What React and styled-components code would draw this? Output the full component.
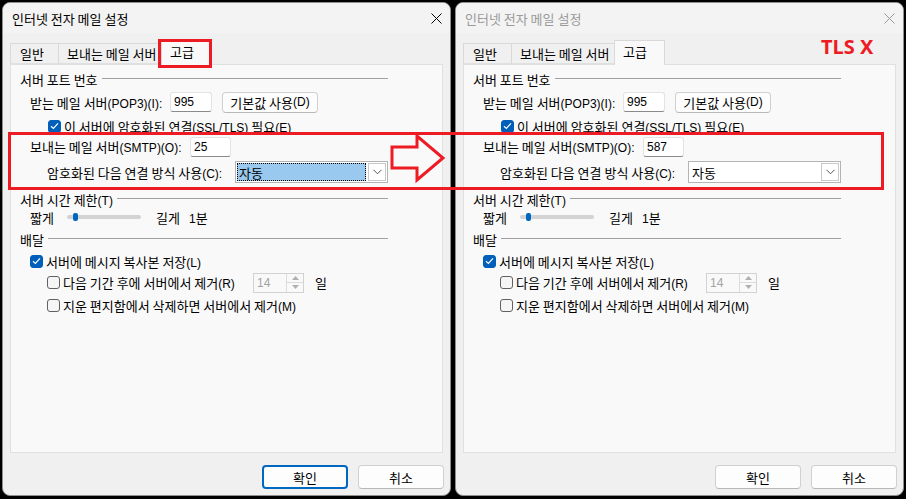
import React from "react";
import styled, { createGlobalStyle, css } from "styled-components";

const GlobalStyle = createGlobalStyle`
  html, body {
    margin: 0;
    padding: 0;
    background: #000;
  }
  body {
    font-family: "Noto Sans CJK KR", "Liberation Sans", sans-serif;
    font-size: 13px;
    color: #000;
  }
`;

const Stage = styled.div`
  position: relative;
  width: 906px;
  height: 499px;
  box-sizing: border-box;
  padding: 2px 0 0 2px;
  display: flex;
  gap: 4px;
  background: #000;
  overflow: hidden;
`;

const Window = styled.div`
  width: 449px;
  height: 494px;
  box-sizing: border-box;
  background: #f0f0f0;
  border: 1px solid #8f8f8f;
  border-radius: 8px;
  overflow: hidden;
  display: flex;
  flex-direction: column;
`;

const TitleBar = styled.div`
  height: 30px;
  flex: none;
  display: flex;
  align-items: center;
  justify-content: space-between;
  padding: 0 8px 0 9px;
  background: #f3f3f3;
  color: ${(p) => (p.$active ? "#000" : "#9a9a9a")};
`;

const Body = styled.div`
  flex: 1;
  display: flex;
  flex-direction: column;
  padding: 7px 7px 0 7px;
`;

const TabStrip = styled.div`
  height: 24px;
  display: flex;
  align-items: flex-end;
  position: relative;
  z-index: 2;
`;

const Tab = styled.div`
  box-sizing: border-box;
  width: ${(p) => p.$w}px;
  height: ${(p) => (p.$selected ? 25 : 21)}px;
  margin-bottom: ${(p) => (p.$selected ? -1 : 0)}px;
  margin-right: -1px;
  padding: 0 0 ${(p) => (p.$selected ? 3 : 0)}px ${(p) => p.$pad}px;
  display: flex;
  align-items: center;
  border: 1px solid #d9d9d9;
  border-bottom: ${(p) => (p.$selected ? "none" : "1px solid #e0e0e0")};
  background: ${(p) => (p.$selected ? "#f9f9f9" : "#f0f0f0")};
  position: relative;
  z-index: ${(p) => (p.$selected ? 2 : 1)};
  white-space: nowrap;
`;

const Panel = styled.div`
  box-sizing: border-box;
  height: 389px;
  background: #f9f9f9;
  border: 1px solid #e0e0e0;
  padding: 5px 0 0 9px;
  display: flex;
  flex-direction: column;
`;

const GroupHead = styled.div`
  width: 368px;
  height: 18px;
  display: flex;
  align-items: center;
  gap: 4px;
  margin-top: ${(p) => p.$mt || 0}px;
  white-space: nowrap;

  &::after {
    content: "";
    flex: 1;
    height: 1px;
    margin-top: -2px;
    background: #a0a0a0;
  }
`;

const Row = styled.div`
  display: flex;
  align-items: center;
  height: ${(p) => p.$h || 20}px;
  margin-top: ${(p) => p.$mt || 0}px;
  padding-left: ${(p) => p.$indent || 0}px;
  white-space: nowrap;
`;

const Label = styled.span`
  flex: none;
  width: ${(p) => (p.$w ? `${p.$w}px` : "auto")};
`;

/* latin runs are set a pixel smaller than the hangul, as the original UI font does */
const Lat = styled.span`
  font-family: "Liberation Sans", sans-serif;
  font-size: 12px;
`;

const TextBox = styled.div`
  box-sizing: border-box;
  width: ${(p) => p.$w}px;
  height: 20px;
  background: #fff;
  border: 1px solid #e3e3e3;
  border-bottom-color: #8a8a8a;
  border-radius: 3px;
  padding-left: 3px;
  display: flex;
  align-items: center;
  font-family: "Liberation Sans", sans-serif;
  font-size: 12px;
`;

const Button = styled.div`
  box-sizing: border-box;
  width: ${(p) => p.$w}px;
  height: ${(p) => p.$h}px;
  margin-left: ${(p) => p.$ml || 0}px;
  background: #fdfdfd;
  border: 1px solid #d0d0d0;
  border-bottom-color: #b8b8b8;
  border-radius: 4px;
  display: flex;
  align-items: center;
  justify-content: center;
  ${(p) =>
    p.$default &&
    css`
      border: 2px solid #0067c0;
    `}
`;

const Box = styled.span`
  box-sizing: border-box;
  width: 13px;
  height: 13px;
  flex: none;
  margin-right: 3px;
  border-radius: 3px;
  border: 1px solid ${(p) => (p.$checked ? "#005fb8" : "#616161")};
  background: ${(p) => (p.$checked ? "#005fb8" : "#f5f5f5")};
  display: flex;
  align-items: center;
  justify-content: center;
`;

const Combo = styled.div`
  box-sizing: border-box;
  width: 153px;
  height: 22px;
  margin-left: 1px;
  background: #fff;
  border: 1px solid #b4b4b4;
  padding: 1px;
  display: flex;
  gap: 2px;
`;

const ComboValue = styled.div`
  flex: 1;
  display: flex;
  align-items: center;
  padding-left: 2px;
  ${(p) =>
    p.$focused &&
    css`
      background: #99c9ef;
      outline: 1px dotted #000;
      outline-offset: -1px;
    `}
`;

const ComboButton = styled.div`
  box-sizing: border-box;
  width: 18px;
  border: 1px solid #c9c9c9;
  background: #fff;
  display: flex;
  align-items: center;
  justify-content: center;
`;

const SliderTrack = styled.div`
  position: relative;
  flex: none;
  width: 74px;
  height: 4px;
  border-radius: 2px;
  background: #d3d3d3;
  margin-right: 15px;
`;

const SliderThumb = styled.div`
  position: absolute;
  left: 6px;
  top: -2px;
  width: 5px;
  height: 8px;
  border-radius: 2px;
  background: #0067c0;
`;

const Spinner = styled.div`
  box-sizing: border-box;
  width: 51px;
  height: 20px;
  border: 1px solid #d2d2d2;
  background: #f9f9f9;
  display: flex;
  margin-right: 11px;
`;

const SpinValue = styled.span`
  flex: 1;
  color: #a3a3a3;
  padding-left: 3px;
  display: flex;
  align-items: center;
  font-family: "Liberation Sans", sans-serif;
  font-size: 12px;
`;

const SpinButtons = styled.div`
  width: 16px;
  display: flex;
  flex-direction: column;
  border-left: 1px solid #dcdcdc;
`;

const SpinArrow = styled.div`
  flex: 1;
  display: flex;
  align-items: center;
  justify-content: center;
  border-top: ${(p) => (p.$down ? "1px solid #dcdcdc" : "none")};
`;

const Footer = styled.div`
  display: flex;
  justify-content: flex-end;
  gap: 10px;
  margin: 12px -1px 0 0;
`;

const RedFrame = styled.div`
  position: absolute;
  z-index: 10;
  box-sizing: border-box;
  left: ${(p) => p.$x}px;
  top: ${(p) => p.$y}px;
  width: ${(p) => p.$w}px;
  height: ${(p) => p.$h}px;
  border: 3px solid #ed1c24;
  pointer-events: none;
`;

const ArrowMark = styled.svg`
  position: absolute;
  z-index: 10;
  left: 388px;
  top: 132px;
`;

const Note = styled.div`
  position: absolute;
  z-index: 10;
  left: 821px;
  top: 35px;
  font-family: "Noto Sans", sans-serif;
  font-weight: 700;
  font-size: 20px;
  line-height: 24px;
  color: #ed1c24;
`;

const Check = () => (
  <svg width="9" height="8" viewBox="0 0 9 8">
    <path d="M1 4.2 L3.4 6.4 L8 1.4" fill="none" stroke="#fff" strokeWidth="1.2" />
  </svg>
);

const Close = ({ color }) => (
  <svg width="11" height="11" viewBox="0 0 11 11">
    <path d="M0.5 0.5 L10.5 10.5 M10.5 0.5 L0.5 10.5" stroke={color} strokeWidth="1" />
  </svg>
);

const Chevron = () => (
  <svg width="9" height="6" viewBox="0 0 9 6">
    <path d="M0.5 0.8 L4.5 4.8 L8.5 0.8" fill="none" stroke="#555" strokeWidth="1" />
  </svg>
);

const Tri = ({ down }) => (
  <svg width="7" height="4" viewBox="0 0 7 4">
    <path d={down ? "M0 0 H7 L3.5 4 Z" : "M0 4 H7 L3.5 0 Z"} fill="#b0b0b0" />
  </svg>
);

function Dialog({ active, smtpPort }) {
  return (
    <Window>
      <TitleBar $active={active}>
        <span>인터넷 전자 메일 설정</span>
        <Close color={active ? "#000" : "#9a9a9a"} />
      </TitleBar>
      <Body>
        <TabStrip>
          <Tab $w={49} $pad={9}>일반</Tab>
          <Tab $w={104} $pad={8}>보내는 메일 서버</Tab>
          <Tab $w={51} $pad={8} $selected>고급</Tab>
        </TabStrip>
        <Panel>
          <GroupHead>서버 포트 번호</GroupHead>
          <Row $h={22} $mt={3} $indent={10}>
            <Label $w={140}>
              받는 메일 서버<Lat>(POP3)(I):</Lat>
            </Label>
            <TextBox $w={42}>995</TextBox>
            <Button $w={96} $h={21} $ml={10}>
              기본값 사용<Lat>(D)</Lat>
            </Button>
          </Row>
          <Row $h={18} $mt={4} $indent={28}>
            <Box $checked>
              <Check />
            </Box>
            <Label>
              이 서버에 암호화된 연결<Lat>(SSL/TLS)</Lat> 필요<Lat>(E)</Lat>
            </Label>
          </Row>
          <Row $h={21} $mt={1} $indent={10}>
            <Label $w={160}>
              보내는 메일 서버<Lat>(SMTP)(O):</Lat>
            </Label>
            <TextBox $w={41}>{smtpPort}</TextBox>
          </Row>
          <Row $h={22} $mt={4} $indent={27}>
            <Label $w={187}>
              암호화된 다음 연결 방식 사용<Lat>(C):</Lat>
            </Label>
            <Combo>
              <ComboValue $focused={active}>자동</ComboValue>
              <ComboButton>
                <Chevron />
              </ComboButton>
            </Combo>
          </Row>
          <GroupHead $mt={7}>
            <span>
              서버 시간 제한<Lat>(T)</Lat>
            </span>
          </GroupHead>
          <Row $h={18} $indent={10}>
            <Label $w={37}>짧게</Label>
            <SliderTrack>
              <SliderThumb />
            </SliderTrack>
            <Label $w={33}>길게</Label>
            <Label>
              <Lat>1</Lat>분
            </Label>
          </Row>
          <GroupHead $mt={4}>배달</GroupHead>
          <Row $h={20} $mt={3} $indent={10}>
            <Box $checked>
              <Check />
            </Box>
            <Label>
              서버에 메시지 복사본 저장<Lat>(L)</Lat>
            </Label>
          </Row>
          <Row $h={21} $mt={1} $indent={27}>
            <Box />
            <Label $w={190}>
              다음 기간 후에 서버에서 제거<Lat>(R)</Lat>
            </Label>
            <Spinner>
              <SpinValue>14</SpinValue>
              <SpinButtons>
                <SpinArrow>
                  <Tri />
                </SpinArrow>
                <SpinArrow $down>
                  <Tri down />
                </SpinArrow>
              </SpinButtons>
            </Spinner>
            <Label>일</Label>
          </Row>
          <Row $h={20} $mt={2} $indent={27}>
            <Box />
            <Label>
              지운 편지함에서 삭제하면 서버에서 제거<Lat>(M)</Lat>
            </Label>
          </Row>
        </Panel>
        <Footer>
          <Button $w={86} $h={24} $default={active}>확인</Button>
          <Button $w={86} $h={24}>취소</Button>
        </Footer>
      </Body>
    </Window>
  );
}

export default function App() {
  return (
    <>
      <GlobalStyle />
      <Stage>
        <Dialog active smtpPort="25" />
        <Dialog smtpPort="587" />
        <RedFrame $x={158} $y={39} $w={54} $h={29} />
        <RedFrame $x={8} $y={132} $w={876} $h={58} />
        <ArrowMark width="60" height="52" viewBox="0 0 60 52">
          <polygon
            points="4,15 29,15 29,4 55,26 29,48 29,36 4,36"
            fill="none"
            stroke="#ed1c24"
            strokeWidth="3"
          />
        </ArrowMark>
        <Note>TLS X</Note>
      </Stage>
    </>
  );
}
